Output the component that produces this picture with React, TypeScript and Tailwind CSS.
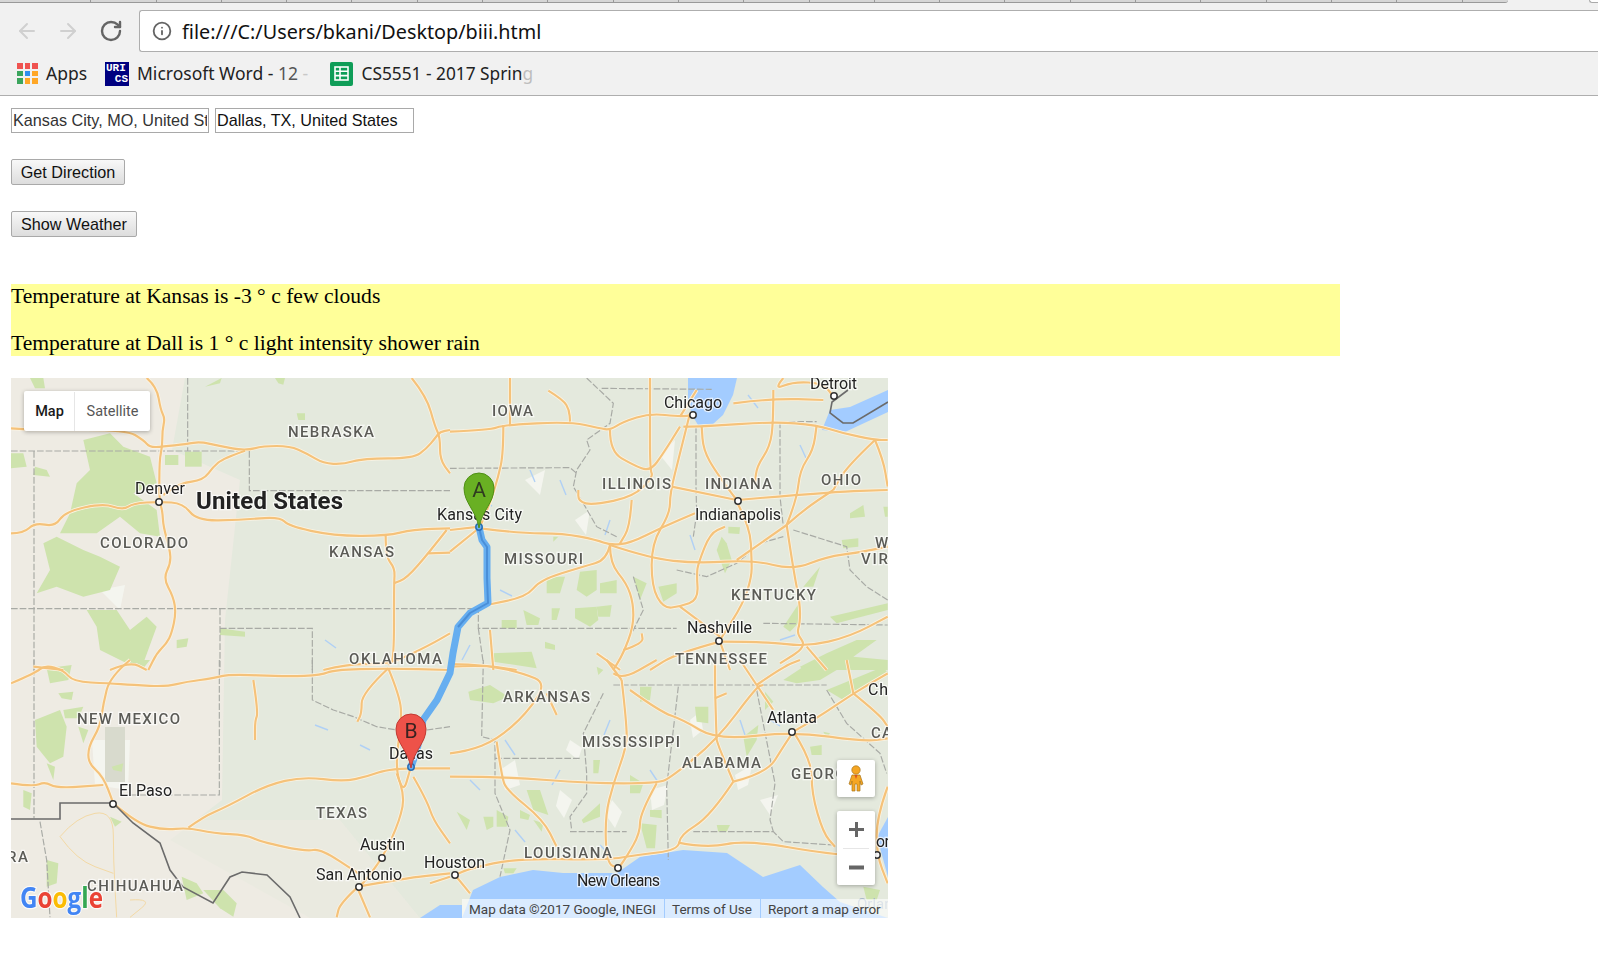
import React from "react";
import { ArrowLeft, ArrowRight, RotateCw, Info } from "lucide-react";

type Z = { ox: number; oy: number; green: string[]; dash: string[]; roads: string[]; thin?: string[] };

const pts = (s: string) => s.trim().split(/\s+/).map((p) => p.split(",").map(Number));
const smooth = (s: string) => {
  const p = pts(s);
  if (p.length < 3) return `M${p[0]}L${p[p.length - 1]}`;
  let d = `M${p[0][0]} ${p[0][1]}`;
  for (let i = 1; i < p.length - 1; i++) {
    const mx = (p[i][0] + p[i + 1][0]) / 2;
    const my = (p[i][1] + p[i + 1][1]) / 2;
    d += `Q${p[i][0]} ${p[i][1]} ${mx} ${my}`;
  }
  const l = p[p.length - 1];
  return d + `L${l[0]} ${l[1]}`;
};
const straight = (s: string) => "M" + pts(s).map((q) => q.join(" ")).join("L");

const zones: Z[] = [
  {
    ox: 0, oy: 370,
    green: [
      "250,210 330,190 370,230 450,260 470,340 400,370 470,420 480,500 420,490 360,440 290,490 180,490 210,430 230,340 270,300",
      "130,520 170,500 250,540 300,560 360,590 330,660 250,680 170,650 110,670 150,600",
      "260,720 350,720 390,780 440,740 470,770 430,880 380,880 300,840 290,770",
      "33,250 70,250 80,290 33,295", "105,290 140,300 150,320 100,315", "555,245 605,245 605,290 555,290",
      "495,255 535,255 535,285 495,285", "90,24 130,24 135,55 105,55", "615,50 665,24 660,40",
      "825,24 855,24 850,44 835,40", "890,130 915,130 915,150 895,150", "660,775 735,785 735,800 660,795",
      "530,810 565,805 560,830 530,835",
    ],
    dash: [
      "33,243 720,243", "563,24 563,243", "748,243 748,362 1350,362", "102,243 102,900", "33,716 1350,716",
      "660,716 660,900", "660,775 937,775 937,900",
    ],
    roads: [
      "440,24 470,50 482,120 495,145 487,180 487,230 478,270 478,395 487,420 490,470 510,540 512,580 490,625 520,680 528,730 515,790 500,820 470,850 445,900",
      "33,175 70,178 140,180 380,180 430,210 450,232 487,230 560,222 600,215 660,228 735,242 790,228 870,228 920,250 970,280 1030,283 1090,265 1240,265 1280,235 1305,205 1320,185 1350,180",
      "735,242 670,265 640,290 610,330 540,340 490,375",
      "33,490 70,490 105,458 165,470 195,425 310,400 370,420 400,400 478,395 550,400 590,452 720,450 840,440 865,468 1000,497 1160,498 1240,478 1350,475",
      "1157,498 1157,560 1185,595 1182,640 1182,870 1165,885",
      "1340,480 1285,550 1220,625 1182,640", "1285,550 1350,548",
      "1235,24 1280,80 1305,170 1320,200 1320,270 1350,310",
      "100,890 190,900", "330,900 390,875 440,900", "970,900 1050,880 1165,885 1290,825 1350,790",
    ],
  },
  {
    ox: 450, oy: 370,
    green: [
      "390,605 440,600 440,660 410,680 380,660", "290,620 345,620 330,670 290,670", "450,640 500,630 500,670 450,670",
      "220,720 270,745 265,765 230,765", "375,715 440,710 445,750 420,770 375,745", "440,710 485,705 480,740 445,740",
      "305,715 330,715 320,750 305,750", "155,750 200,750 200,775 155,775", "285,815 315,825 315,840 285,835",
      "125,850 245,845 260,895 130,875", "625,650 680,640 680,670 640,695", "550,620 590,640 570,690",
      "815,500 830,520 845,570 825,610 800,540", "835,470 870,472 868,492 835,490", "1000,770 1050,695 1045,760 1020,785",
      "1060,650 1110,590 1090,650", "1175,510 1225,505 1225,530 1180,535", "1200,430 1240,405 1245,440 1200,445",
      "1140,740 1313,700 1313,720 1160,760", "1050,890 1130,850 1220,810 1280,810 1210,860 1313,870 1313,900 1060,900",
      "1300,410 1313,410 1313,440 1305,440", "310,500 325,500 310,515",
    ],
    dash: [
      "0,295 360,293 380,310", "455,55 785,58", "738,170 738,350 740,430 730,500", "990,155 990,380 1000,470", "990,155 1100,155",
      "0,716 85,716 85,775 680,775", "85,775 100,880", "940,760 1313,765",
      "410,24 490,100 480,160 410,210 420,240 380,300 370,350 400,400 440,470 500,500",
      "1030,480 1190,530 1200,600 1250,650 1313,690", "680,600 770,620 860,580 930,520 1000,500",
      "550,620 580,720 540,800 500,880",
    ],
    roads: [
      "0,185 120,180 160,165 360,155 450,175 480,180 520,155 600,130 690,140 730,135",
      "180,24 180,165", "160,165 160,250 145,320 120,400 90,470", "295,62 340,90 358,120 360,155",
      "480,180 480,245 550,285 600,305 640,250 690,170", "600,24 600,130 600,300 610,320 550,380 430,405 385,395 385,360",
      "545,390 540,470 510,520", "90,475 210,490 340,490 440,510 480,525 540,520 640,470 735,430",
      "480,525 470,570 400,590 270,630 230,680 110,705", "480,525 480,580 530,640 550,700 550,770 520,850 490,900",
      "480,525 600,565 740,580 910,570 1030,600 1130,560 1225,548 1313,530",
      "720,130 690,250 660,370 660,430 605,520 605,650 640,715 690,710 745,690 740,610 745,580 780,490 825,470",
      "665,350 860,390", "860,390 1150,365 1313,360", "860,395 900,470 905,570 905,620 880,700 810,810",
      "860,390 800,310 760,240 755,170", "1010,465 1060,420 1150,360", "1010,465 860,570", "1010,465 1040,390 1050,300 1090,240 1100,165",
      "700,170 760,170 970,155 1100,165 1180,190 1275,210 1313,210", "970,60 970,155 960,230 920,290 915,340",
      "1000,24 970,60 1030,35 1120,40 1150,80", "850,100 970,85 1120,90", "1010,465 1030,600 1050,700 1050,760 1040,790 1070,830 990,880",
      "810,815 680,850 600,900", "810,815 950,815 1070,830 1200,800 1313,740", "810,815 840,900", "690,710 810,800",
      "440,850 490,885 510,900", "520,840 580,820 575,790", "1275,210 1190,290 1150,360", "1275,210 1300,270 1313,350",
      "120,780 130,900", "0,890 100,885 200,900", "0,480 90,470", "0,545 80,480", "740,60 690,140", "1070,830 1130,900",
    ],
  },
  {
    ox: 0, oy: 660,
    green: [
      "105,180 180,150 200,200 190,290 150,310 110,260", "140,25 215,15 205,60 150,70", "190,150 250,140 235,175 195,175",
      "235,200 265,210 250,250", "175,100 220,95 215,120 185,115", "335,320 370,310 365,335 340,330", "140,310 165,320 160,360",
      "70,390 95,400 90,450 70,440", "330,470 365,485 345,500", "545,650 590,670 610,700 560,720",
      "610,690 670,690 710,730 700,770 660,745", "140,600 175,610 170,670 140,680", "400,0 450,0 430,25",
    ],
    dash: [
      "102,0 102,475", "658,0 658,405 380,405", "937,0 937,120 1000,150 1060,170 1130,200 1190,210", "1280,210 1350,200",
      "120,485 140,600 150,772",
    ],
    roads: [
      "33,70 105,40 135,15 190,30 220,65 325,70 400,75 500,80 560,65 640,55 690,42 860,50 965,45 1000,30 1160,25 1350,30",
      "390,0 330,50 310,130 300,200 265,260 265,310 310,350 340,430", "33,370 100,380 135,365 170,385 310,375",
      "340,430 410,490 490,510 565,503 640,520 740,525 780,545 920,575 960,565 1075,640",
      "565,503 610,470 680,440 800,375 910,350 1030,365 1100,350 1170,325 1350,325", "760,60 775,160 765,180 765,240",
      "1165,25 1085,100 1085,160 1072,185", "1165,25 1200,110 1205,180 1185,320 1210,400 1230,330",
      "1190,340 1215,400 1200,480 1150,590 1090,670 1075,680", "1240,350 1280,420 1300,480 1350,550",
      "1075,680 1210,655 1350,640", "1075,680 1020,730 1010,772", "1075,690 1110,772", "1290,670 1350,650",
    ],
    thin: [
      "180,530 230,470 340,450 340,600 350,772", "180,530 230,600 340,640", "390,720 460,715 390,772",
    ],
  },
  {
    ox: 450, oy: 660,
    green: [
      "55,95 120,75 175,110 130,130 60,120", "570,80 605,80 600,120 570,125", "735,140 775,140 775,190 740,185",
      "430,300 450,300 445,340 430,340", "540,345 580,370 570,400 540,400", "230,390 270,390 295,465 250,450",
      "395,480 450,430 450,470 400,490", "100,470 130,470 130,500 110,510", "140,450 175,470 170,500 140,500",
      "20,455 60,480 50,510", "210,450 240,465 235,480 210,475", "250,480 280,490 275,515", "600,450 635,450 635,475 600,470",
      "570,490 620,495 615,565 590,565", "800,495 840,495 830,515 805,515", "1080,260 1115,255 1115,285 1085,285",
      "880,230 925,195 920,240 890,290", "1000,60 1060,20 1160,30 1110,60 1040,70", "440,20 460,30 445,45",
      "1120,215 1140,220 1130,235", "945,95 970,125 945,150", "1240,680 1290,690 1280,720 1250,720",
      "160,625 200,625 190,640 165,640", "1130,90 1300,20 1313,40 1180,120",
    ],
    dash: [
      "100,0 95,230 135,240 135,400 180,510 150,650", "135,295 390,295", "490,75 930,75 1130,75", "685,80 650,380 655,600",
      "360,515 530,515", "730,515 970,515 1000,545 1150,555", "920,90 975,370 960,480 970,515",
      "460,100 400,220 410,340 410,400 360,470 365,510", "1130,90 1190,190 1290,280 1310,340",
    ],
    roads: [
      "0,280 50,275 140,240 230,160 290,70 220,40 110,15 0,12", "290,100 320,165",
      "0,350 160,350 420,370 620,370 660,355 800,240 920,80 940,75",
      "140,245 155,350 170,390 280,480 320,560", "515,60 530,190 530,260 490,370 465,470 470,610 505,625",
      "540,90 630,155 700,180 800,240 1030,215 1245,245 1313,235", "800,240 795,100 795,0", "795,115 830,100",
      "620,370 570,460 570,520 530,590 505,625", "850,365 780,470 690,525 685,570 560,585 470,600 200,595 60,625 15,645",
      "685,548 770,565 890,540 1150,585 1280,585", "850,365 810,270 800,240", "850,365 950,340 1000,260 1030,215",
      "1030,215 1085,300 1085,400 1120,520 1155,560", "1030,215 1100,175 1210,100 1313,40", "1210,100 1290,165 1313,200",
      "1210,100 1190,0", "920,75 870,0", "920,75 1000,20 1050,0", "920,75 970,150", "1313,380 1280,470 1280,585 1313,670",
      "490,40 515,60 620,0", "515,60 470,0", "15,645 60,700",
    ],
  },
];

type L = [string, number, number, number, "s" | "c"];
const labels: L[] = [
  ["NEBRASKA", 288, 437, 86, "s"], ["COLORADO", 100, 548, 88, "s"], ["KANSAS", 329, 557, 65, "s"], ["OKLAHOMA", 349, 664, 93, "s"],
  ["IOWA", 492, 416, 41, "s"], ["ILLINOIS", 602, 489, 69, "s"], ["INDIANA", 705, 489, 67, "s"], ["OHIO", 821, 485, 40, "s"],
  ["MISSOURI", 504, 564, 79, "s"], ["KENTUCKY", 731, 600, 85, "s"], ["TENNESSEE", 675, 664, 92, "s"], ["NEW MEXICO", 77, 724, 103, "s"],
  ["TEXAS", 316, 818, 51, "s"], ["CHIHUAHUA", 87, 891, 96, "s"], ["RA", 7, 862, 21, "s"], ["ARKANSAS", 503, 702, 87, "s"],
  ["MISSISSIPPI", 582, 747, 98, "s"], ["ALABAMA", 682, 768, 79, "s"], ["GEORGIA", 791, 779, 72, "s"], ["LOUISIANA", 524, 858, 88, "s"],
  ["W", 875, 548, 15, "s"], ["VIR", 861, 564, 27, "s"], ["CA", 871, 738, 21, "s"],
  ["Denver", 135, 494, 50, "c"], ["Chicago", 664, 408, 58, "c"], ["Detroit", 810, 389, 47, "c"], ["Indianapolis", 695, 520, 86, "c"],
  ["Kansas City", 437, 520, 85, "c"], ["Nashville", 687, 633, 65, "c"], ["El Paso", 119, 796, 53, "c"], ["Austin", 360, 850, 45, "c"],
  ["San Antonio", 316, 880, 86, "c"], ["Dallas", 389, 759, 44, "c"], ["Houston", 424, 868, 61, "c"], ["Atlanta", 767, 723, 50, "c"],
  ["New Orleans", 577, 886, 83, "c"], ["Ch", 868, 695, 20, "c"], ["or", 876, 847, 14, "c"],
];

const dots = [
  [159, 502], [693, 415], [834, 396], [738, 501], [719, 641], [113, 804], [382, 858], [359, 887], [455, 875], [618, 868], [792, 732], [877, 855],
];

const whites = [
  "M690 720L700 712L703 730L693 738Z", "M570 740L582 748L578 760L566 750Z", "M735 775L752 765L748 785L738 790Z",
  "M560 790L572 800L564 818L556 806Z", "M650 790L668 785L664 805L652 810Z", "M612 800L622 812L615 828L606 815Z",
  "M760 800L778 795L770 815Z", "M500 770L515 760L520 785L505 790Z", "M92 740L130 740L128 790L95 785Z",
  "M660 455L675 440L672 470Z", "M525 480L545 470L540 495Z", "M575 520L590 510L586 535Z", "M100 590L125 585L120 610Z",
];

const ticks = [
  "M748 395L758 408", "M700 400L705 412", "M560 480L566 495", "M610 520L605 535", "M690 535L695 550", "M800 445L806 458",
  "M530 470L535 482", "M780 640L795 635", "M500 590L512 596", "M470 645L462 660", "M325 640L336 648", "M480 500L492 506",
  "M740 720L745 735", "M610 720L604 735", "M505 740L515 755", "M650 770L658 782", "M770 720L780 726", "M470 780L480 790",
  "M560 770L552 785", "M315 725L328 730", "M360 745L370 750", "M600 845L610 855", "M515 830L525 842",
];

function MapDrawing() {
  return (
    <svg viewBox="11 378 877 540" width={877} height={540} className="block blur-[0.4px]">
      <rect x={11} y={378} width={877} height={540} fill="#e4e9dd" />
      <path d="M11 378H185L172 450L240 480L225 620L222 800L170 840L310 918H11Z" fill="#eeebe3" />
      <path d="M11 820H340L420 918H11Z" fill="#eeebe3" opacity={0.6} />
      {whites.map((d) => (
        <path key={d} d={d} fill="#f4f5ef" />
      ))}
      <rect x={105} y={727} width={20} height={55} fill="#d8dacd" />
      {/* water */}
      <path d="M688 378H737L733 395L723 415L713 424L698 425L692 415L688 400Z" fill="#a3ccff" />
      <path d="M888 390L850 407L830 410L822 430L845 432L888 412Z" fill="#a3ccff" />
      <path d="M462 918L473 890L500 877L533 870L563 873L617 873L640 857L683 850L727 853L763 877L800 865L823 887L840 902L888 918Z" fill="#a3ccff" />
      <path d="M888 817L877 837L888 877Z" fill="#a3ccff" />
      <path d="M420 918L440 905L462 905L462 918Z" fill="#a3ccff" />
      {ticks.map((d) => (
        <path key={d} d={d} stroke="#b0d0f5" strokeWidth={1.4} fill="none" />
      ))}
      {zones.map((z, i) => (
        <g key={i} transform={`translate(${z.ox} ${z.oy}) scale(${1 / 3})`}>
          {z.green.map((g, j) => (
            <polygon key={j} points={g} fill="#cee3ad" />
          ))}
          {z.dash.map((d, j) => (
            <path key={j} d={straight(d)} fill="none" stroke="#a8aaa5" strokeWidth={3.5} strokeDasharray="20 6" />
          ))}
          {z.thin?.map((d, j) => (
            <path key={j} d={smooth(d)} fill="none" stroke="#f3d9a5" strokeWidth={3} />
          ))}
        </g>
      ))}
      {zones.map((z, i) => (
        <g key={i} transform={`translate(${z.ox} ${z.oy}) scale(${1 / 3})`}>
          {z.roads.map((d, j) => (
            <path key={j} d={smooth(d)} fill="none" stroke="#fbf4e4" strokeWidth={11} strokeLinejoin="round" />
          ))}
        </g>
      ))}
      {zones.map((z, i) => (
        <g key={i} transform={`translate(${z.ox} ${z.oy}) scale(${1 / 3})`}>
          {z.roads.map((d, j) => (
            <path key={j} d={smooth(d)} fill="none" stroke="#f5c27a" strokeWidth={6.5} strokeLinejoin="round" />
          ))}
        </g>
      ))}
      {/* international border */}
      <path d="M11 819H60V803H113L133 823L160 843L170 870L183 887L213 903L230 877L242 872L267 875L290 897L300 918" fill="none" stroke="#6b6b6b" strokeWidth={1.6} />
      <path d="M848 390L832 402L830 413L843 423L853 423L888 402" fill="none" stroke="#6b6b6b" strokeWidth={1.6} />
      {/* route */}
      <path d="M479 527L482 540L487 547L487 578L488 603L470 613L458 627L453 653L450 673L437 700L423 720L417 750L411 767" fill="none" stroke="#66aef0" strokeWidth={7} strokeLinejoin="round" />
      <path d="M479 527L482 540L487 547L487 578L488 603L470 613L458 627" fill="none" stroke="#4a8fd8" strokeWidth={2} strokeLinejoin="round" />
      {labels.map(([t, x, y, w, k]) => (
        <text
          key={t}
          x={x}
          y={y}
          textLength={w}
          lengthAdjust="spacing"
          fontFamily="Roboto, sans-serif"
          fontSize={k === "s" ? 15 : 16}
          fontWeight={k === "s" ? 500 : 400}
          fill={k === "s" ? "#5b5b56" : "#222222"}
          stroke="#ffffff"
          strokeOpacity={0.7}
          strokeWidth={2.5}
          paintOrder="stroke"
        >
          {t}
        </text>
      ))}
      <text x={196} y={509} textLength={147} fontFamily="Roboto, sans-serif" fontSize={24} fontWeight={700} fill="#222222" stroke="#ffffff" strokeOpacity={0.7} strokeWidth={2.5} paintOrder="stroke">
        United States
      </text>
      <text x={857} y={909} fontFamily="Roboto, sans-serif" fontSize={15} fill="#a9b8c8">
        Orlan
      </text>
      {dots.map(([x, y]) => (
        <circle key={x} cx={x} cy={y} r={3.2} fill="#ffffff" stroke="#333333" strokeWidth={1.5} />
      ))}
      <circle cx={479} cy={527} r={3.2} fill="#6ab0f0" stroke="#2a6fb5" strokeWidth={1.5} />
      <circle cx={411} cy={767} r={3.2} fill="#6ab0f0" stroke="#2a6fb5" strokeWidth={1.5} />
      {/* markers */}
      <path d="M479 528C476 510 464 503 464 488A15 15 0 1 1 494 488C494 503 482 510 479 528Z" fill="#69b023" stroke="#4f8f16" />
      <text x={479} y={497} textAnchor="middle" fontFamily="Roboto, sans-serif" fontSize={21} fill="#2f3a20">A</text>
      <path d="M411 768C408 750 396 743 396 729A15 15 0 1 1 426 729C426 743 414 750 411 768Z" fill="#ee5249" stroke="#c23a32" />
      <text x={411} y={738} textAnchor="middle" fontFamily="Roboto, sans-serif" fontSize={21} fill="#3a2220">B</text>
      {/* Google logo */}
      <text x={20} y={908} textLength={83} lengthAdjust="spacingAndGlyphs" fontFamily="'Open Sans', sans-serif" fontSize={29} fontWeight={700} stroke="#ffffff" strokeOpacity={0.75} strokeWidth={2.5} paintOrder="stroke">
        <tspan fill="#4285f4">G</tspan>
        <tspan fill="#ea4335">o</tspan>
        <tspan fill="#fbbc05">o</tspan>
        <tspan fill="#4285f4">g</tspan>
        <tspan fill="#34a853">l</tspan>
        <tspan fill="#ea4335">e</tspan>
      </text>
    </svg>
  );
}

export default function App() {
  return (
    <div className="w-[1598px] min-h-[954px] bg-white font-['Liberation_Sans',sans-serif] overflow-hidden">
      {/* browser chrome */}
      <header className="bg-[#f1f1f1] border-b border-[#aeaeae] h-[96px]">
        <div className="h-[3px] flex justify-between">
          <div className="w-[1508px] bg-[#d6d6d6] border-b border-[#999999] rounded-br-[3px] flex pl-[26px] overflow-hidden">
            {Array.from({ length: 22 }, (_, i) => (
              <div key={i} className="w-[65.3px] shrink-0 border-r border-[#999999]" />
            ))}
          </div>
          <div className="w-[9px] bg-white border-l border-b border-[#aaaaaa] rounded-bl-[3px]" />
        </div>
        <div className="h-[49px] pt-[7px] flex items-start">
          <div className="w-[139px] h-[42px] flex items-center shrink-0">
            <ArrowLeft className="ml-[15px] w-[24px] h-[24px] text-[#d0d0d0]" strokeWidth={2} />
            <ArrowRight className="ml-[17px] w-[24px] h-[24px] text-[#d0d0d0]" strokeWidth={2} />
            <RotateCw className="ml-[19px] w-[24px] h-[24px] text-[#646464]" strokeWidth={2.4} />
          </div>
          <div className="flex-1 h-[42px] bg-white border border-r-0 border-[#aeaeae] rounded-l-[3px] flex items-center pl-[12px] font-['Noto_Sans',sans-serif]">
            <Info className="w-[20px] h-[20px] text-[#646464]" strokeWidth={2.2} />
            <span className="ml-[10px] pt-px text-[19.8px] text-[#111111] leading-none">file:///C:/Users/bkani/Desktop/biii.html</span>
          </div>
        </div>
        <div className="h-[43px] flex items-center font-['Noto_Sans',sans-serif] text-[17.5px] text-[#222222]">
          <div className="ml-[17px] grid grid-cols-3 gap-[2px]">
            <span className="w-[5.5px] h-[5.5px] bg-[#ef5350]" />
            <span className="w-[5.5px] h-[5.5px] bg-[#ef5350]" />
            <span className="w-[5.5px] h-[5.5px] bg-[#ef5350]" />
            <span className="w-[5.5px] h-[5.5px] bg-[#3ba55d]" />
            <span className="w-[5.5px] h-[5.5px] bg-[#2f8ff0]" />
            <span className="w-[5.5px] h-[5.5px] bg-[#ffa726]" />
            <span className="w-[5.5px] h-[5.5px] bg-[#3ba55d]" />
            <span className="w-[5.5px] h-[5.5px] bg-[#ffa726]" />
            <span className="w-[5.5px] h-[5.5px] bg-[#ffa726]" />
          </div>
          <span className="ml-[8.5px] w-[59px]">Apps</span>
          <div className="w-[24px] h-[24px] bg-[#000080] text-white font-['Liberation_Mono',monospace] font-bold text-[11px] leading-[11px] px-[1px] pt-[1px] flex flex-col">
            <span>URI</span>
            <span className="self-end">CS</span>
          </div>
          <span className="ml-[8px] w-[192.5px] whitespace-nowrap">
            Microsoft Word - <span className="text-[#555555]">12</span> <span className="text-[#c8c8c8]">-</span>
          </span>
          <div className="w-[23px] h-[24px] bg-[#0f9d58] rounded-[2px] flex items-center justify-center">
            <svg width="15" height="15" viewBox="0 0 15 15" fill="none" stroke="#ffffff" strokeWidth="1.6">
              <rect x="1" y="1" width="13" height="13" />
              <path d="M1 5.3H14M1 9.6H14M6 1V14" />
            </svg>
          </div>
          <span className="ml-[9px] text-[17.3px] whitespace-nowrap">
            CS5551 - 2017 Sprin<span className="text-[#bdbdbd]">g</span>
          </span>
        </div>
      </header>

      {/* page */}
      <main className="pl-[11px] pt-[12px]">
        <div className="flex gap-[6px]">
          <input readOnly value="Kansas City, MO, United States" className="w-[198px] h-[25px] border border-[#a9a9a9] px-[1px] text-[16.2px] text-[#333333] outline-none" />
          <input readOnly value="Dallas, TX, United States" className="w-[199px] h-[25px] border border-[#a9a9a9] px-[1px] text-[16.2px] text-[#111111] outline-none" />
        </div>
        <button className="block mt-[26px] w-[114px] h-[26px] border border-[#a9a9a9] rounded-[2px] bg-gradient-to-b from-[#f8f8f8] to-[#dddddd] text-[16.2px] text-[#111111]">
          Get Direction
        </button>
        <button className="block mt-[26px] w-[126px] h-[26px] border border-[#a9a9a9] rounded-[2px] bg-gradient-to-b from-[#f8f8f8] to-[#dddddd] text-[16.2px] text-[#111111]">
          Show Weather
        </button>
        <div className="mt-[47px] w-[1329px] h-[72px] bg-[#ffff99] font-['Liberation_Serif',serif] text-[21.6px] leading-[25px] text-black">
          <p>Temperature at Kansas is -3 ° c few clouds</p>
          <p className="mt-[22px]">Temperature at Dall is 1 ° c light intensity shower rain</p>
        </div>
        <div className="relative mt-[22px] w-[877px] h-[540px] overflow-hidden font-['Roboto',sans-serif]">
          <MapDrawing />
          <div className="absolute left-[13px] top-[13px] h-[40px] w-[126px] bg-white rounded-[2px] shadow-[0_1px_4px_rgba(0,0,0,0.3)] flex items-center text-[14.5px] pl-px pt-px">
            <span className="w-[50px] h-full border-r border-[#e6e6e6] flex items-center justify-center font-medium text-[#1a1a1a]">Map</span>
            <span className="flex-1 flex items-center justify-center text-[#565656]">Satellite</span>
          </div>
          <div className="absolute left-[826px] top-[382px] w-[38px] h-[37px] bg-white rounded-[2px] shadow-[0_1px_4px_rgba(0,0,0,0.3)] flex items-center justify-center">
            <svg width="16" height="28" viewBox="0 0 16 28">
              <circle cx="8" cy="5" r="4.2" fill="#f5a623" stroke="#a9761a" strokeWidth="0.7" />
              <path d="M4 10H12L15 19L13 20L12 16V26H9V19H7V26H4V16L3 20L1 19Z" fill="#f5a623" stroke="#a9761a" strokeWidth="0.7" />
              <path d="M6.5 10H9.5L8 14Z" fill="#d9541e" />
            </svg>
          </div>
          <div className="absolute left-[826px] top-[433px] w-[38px] h-[74px] bg-white rounded-[2px] shadow-[0_1px_4px_rgba(0,0,0,0.3)] flex flex-col items-center">
            <div className="h-[37px] flex items-center justify-center">
              <svg width="15" height="15" viewBox="0 0 15 15">
                <path d="M6 0H9V6H15V9H9V15H6V9H0V6H6Z" fill="#666666" />
              </svg>
            </div>
            <div className="w-[26px] h-px bg-[#e6e6e6]" />
            <div className="h-[36px] flex items-center justify-center">
              <svg width="15" height="5" viewBox="0 0 15 5">
                <rect width="15" height="4" y="0.5" fill="#666666" />
              </svg>
            </div>
          </div>
          <div className="absolute right-0 bottom-0 h-[19px] w-[426px] flex gap-px text-[13.5px] leading-[20px] text-[#444444] whitespace-nowrap overflow-hidden">
            <span className="w-[202px] bg-white/60 pl-[7px]">Map data ©2017 Google, INEGI</span>
            <span className="w-[95px] bg-white/60 pl-[7px]">Terms of Use</span>
            <span className="flex-1 bg-white/60 pl-[7px]">Report a map error</span>
          </div>
        </div>
      </main>
    </div>
  );
}
